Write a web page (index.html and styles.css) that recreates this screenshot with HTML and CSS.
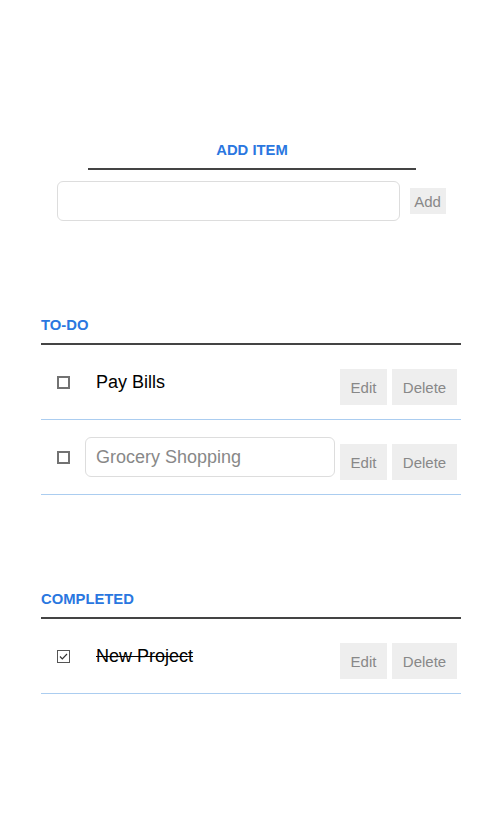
FILE: index.html
```html
<!DOCTYPE html>
<html lang="en">
<head>
<meta charset="utf-8">
<title>Todo</title>
<link rel="stylesheet" href="styles.css">
</head>
<body>
<div class="container">
  <section class="add">
    <h2 class="add-title">Add item</h2>
    <div class="add-row">
      <input class="text-input add-input" type="text">
      <button class="btn btn-add">Add</button>
    </div>
  </section>

  <h3 class="list-title">To-do</h3>
  <ul class="list">
    <li class="item">
      <div class="item-main">
        <span class="check"></span>
        <span class="label">Pay Bills</span>
      </div>
      <div class="actions">
        <button class="btn btn-edit">Edit</button>
        <button class="btn btn-delete">Delete</button>
      </div>
    </li>
    <li class="item">
      <div class="item-main">
        <span class="check"></span>
        <input class="text-input edit-input" type="text" value="Grocery Shopping">
      </div>
      <div class="actions">
        <button class="btn btn-edit">Edit</button>
        <button class="btn btn-delete">Delete</button>
      </div>
    </li>
  </ul>

  <h3 class="list-title completed-title">Completed</h3>
  <ul class="list">
    <li class="item">
      <div class="item-main">
        <span class="check checked"><svg width="11" height="11" viewBox="0 0 11 11"><path d="M2 5.5 L4.3 7.8 L9 3" fill="none" stroke="#333" stroke-width="1.2"/></svg></span>
        <span class="label done">New Project</span>
      </div>
      <div class="actions">
        <button class="btn btn-edit">Edit</button>
        <button class="btn btn-delete">Delete</button>
      </div>
    </li>
  </ul>
</div>
</body>
</html>
```

FILE: styles.css
```css
* { box-sizing: border-box; }

body {
  margin: 0;
  background: #fff;
  color: #000;
  font-family: "Liberation Sans", Arial, sans-serif;
}

.container {
  width: 420px;
  margin-left: 41px;
  padding-top: 142px;
  padding-bottom: 40px;
}

.add-title,
.list-title {
  margin: 0;
  font-size: 14.8px;
  line-height: 17px;
  font-weight: 700;
  text-transform: uppercase;
  color: #2a77e0;
}

.add-title {
  text-align: center;
  width: 328px;
  margin: 0 45px 0 47px;
  padding-bottom: 9px;
  border-bottom: 2px solid #444;
}

.add-row {
  display: flex;
  justify-content: center;
  align-items: center;
  gap: 10px;
  margin-top: 11px;
}

.text-input {
  height: 40px;
  border: 1px solid #ddd;
  border-radius: 6px;
  background: #fff;
  padding: 0 10px;
  font-family: "Liberation Sans", Arial, sans-serif;
  font-size: 18px;
  color: #888;
  outline: none;
}

.add-input { width: 343px; }

.btn {
  border: 0;
  background: #eee;
  color: #888;
  font-family: "Liberation Sans", Arial, sans-serif;
  font-size: 15px;
  padding: 0;
  cursor: pointer;
}

.btn-add {
  width: 36px;
  height: 26px;
}

.list-title {
  margin-top: 96px;
  padding-bottom: 9px;
  border-bottom: 2px solid #444;
}

.list {
  list-style: none;
  margin: 0;
  padding: 0;
}

.item {
  display: flex;
  height: 75px;
  border-bottom: 1px solid #abcdf0;
  padding-right: 4px;
}

.item-main {
  display: flex;
  align-items: center;
  height: 40px;
  margin-top: 17px;
  padding-left: 16px;
}

.check {
  width: 13px;
  height: 13px;
  border: 2px solid #727272;
  background: #fff;
  flex: none;
  margin-right: 15px;
  display: flex;
  align-items: center;
  justify-content: center;
}

.check.checked {
  border: 1px solid #555;
}

.label {
  width: 250px;
  padding-left: 11px;
  font-size: 18px;
  line-height: 40px;
  color: #000;
}

.label.done { text-decoration: line-through; }

.edit-input { width: 250px; }

.actions {
  display: flex;
  gap: 5px;
  margin-left: auto;
  margin-top: 24px;
}

.btn-edit,
.btn-delete { height: 36px; }

.btn-edit { width: 47px; }
.btn-delete { width: 65px; }
```
